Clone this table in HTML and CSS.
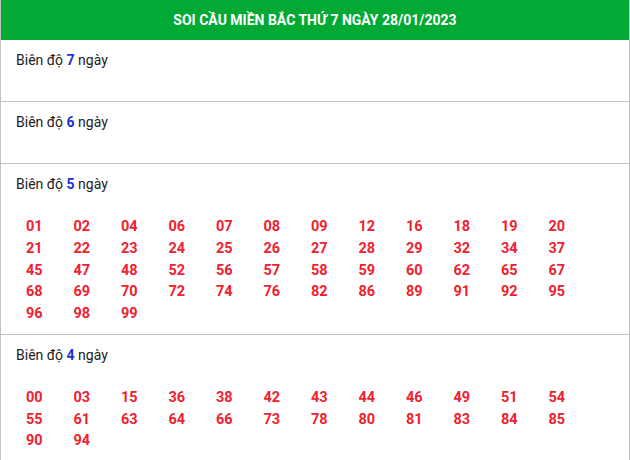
FILE: index.html
```html
<!DOCTYPE html>
<html lang="vi">
<head>
    <meta charset="UTF-8">
    <meta name="viewport" content="width=device-width, initial-scale=1.0">
    <title>Soi cầu miền Bắc</title>
    <link rel="stylesheet" href="styles.css">
</head>
<body>
    <div class="soicau">
        <div class="soicau-title">SOI CẦU MIỀN BẮC THỨ 7 NGÀY 28/01/2023</div>

        <div class="bien-do">
            <div class="bien-do-label">Biên độ <b>7</b> ngày</div>
            <div class="so-list"></div>
        </div>

        <div class="bien-do">
            <div class="bien-do-label">Biên độ <b>6</b> ngày</div>
            <div class="so-list"></div>
        </div>

        <div class="bien-do">
            <div class="bien-do-label">Biên độ <b>5</b> ngày</div>
            <div class="so-list">
                <span>01</span><span>02</span><span>04</span><span>06</span><span>07</span><span>08</span>
                <span>09</span><span>12</span><span>16</span><span>18</span><span>19</span><span>20</span>
                <span>21</span><span>22</span><span>23</span><span>24</span><span>25</span><span>26</span>
                <span>27</span><span>28</span><span>29</span><span>32</span><span>34</span><span>37</span>
                <span>45</span><span>47</span><span>48</span><span>52</span><span>56</span><span>57</span>
                <span>58</span><span>59</span><span>60</span><span>62</span><span>65</span><span>67</span>
                <span>68</span><span>69</span><span>70</span><span>72</span><span>74</span><span>76</span>
                <span>82</span><span>86</span><span>89</span><span>91</span><span>92</span><span>95</span>
                <span>96</span><span>98</span><span>99</span>
            </div>
        </div>

        <div class="bien-do">
            <div class="bien-do-label">Biên độ <b>4</b> ngày</div>
            <div class="so-list">
                <span>00</span><span>03</span><span>15</span><span>36</span><span>38</span><span>42</span>
                <span>43</span><span>44</span><span>46</span><span>49</span><span>51</span><span>54</span>
                <span>55</span><span>61</span><span>63</span><span>64</span><span>66</span><span>73</span>
                <span>78</span><span>80</span><span>81</span><span>83</span><span>84</span><span>85</span>
                <span>90</span><span>94</span>
            </div>
        </div>
    </div>
</body>
</html>
```

FILE: styles.css
```css
body {
    margin: 0;
    font-family: Roboto, "Liberation Sans", Arial, sans-serif;
    font-size: 14px;
    color: #222;
    background: #fff;
}
.soicau {
    width: 630px;
    box-sizing: border-box;
    border-left: 1px solid #c4c4c4;
    border-right: 1px solid #c4c4c4;
}
.soicau-title {
    height: 40px;
    line-height: 40px;
    background-color: #02a934;
    color: #fff;
    font-weight: bold;
    font-size: 14px;
    text-align: center;
}
.bien-do {
    padding: 10px 15px 9px 15px;
    border-bottom: 1px solid #c4c4c4;
}
.bien-do-label {
    line-height: 20px;
    margin-bottom: 22px;
}
.bien-do-label b {
    color: #1b32d8;
}
.so-list {
    display: grid;
    grid-template-columns: repeat(12, 47.5px);
    padding-left: 10px;
}
.so-list span {
    line-height: 21.75px;
    font-weight: bold;
    font-size: 14.5px;
    color: #f0212e;
}
```
